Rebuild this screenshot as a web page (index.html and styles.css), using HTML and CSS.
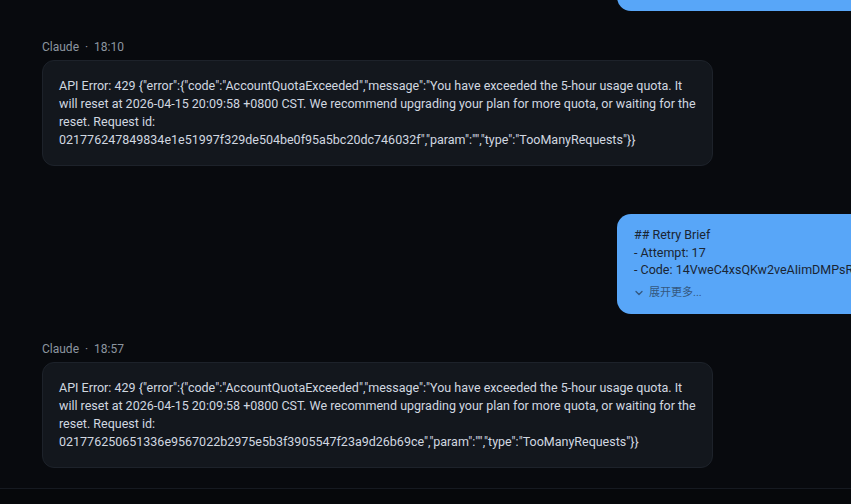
FILE: index.html
```html
<!DOCTYPE html>
<html lang="en">
<head>
<meta charset="utf-8">
<title>Chat</title>
<link rel="stylesheet" href="styles.css">
</head>
<body>
<div class="page">
  <div class="thread">
    <div class="row row-user row-first">
      <div class="user-bubble user-bubble-top"></div>
    </div>

    <div class="row row-claude">
      <div class="meta">Claude <span class="dot">·</span> 18:10</div>
      <div class="claude-bubble">API Error: 429 {"error":{"code":"AccountQuotaExceeded","message":"You have exceeded the 5-hour usage quota. It will reset at 2026-04-15 20:09:58 +0800 CST. We recommend upgrading your plan for more quota, or waiting for the reset. Request id: 021776247849834e1e51997f329de504be0f95a5bc20dc746032f","param":"","type":"TooManyRequests"}}</div>
    </div>

    <div class="row row-user">
      <div class="user-bubble">
        <div class="user-text">## Retry Brief<br>- Attempt: 17<br>- Code: 14VweC4xsQKw2veAIimDMPsRUxY</div>
        <div class="expand">
          <svg class="chev" width="10" height="10" viewBox="0 0 10 10"><path d="M2 3.5 L5 6.5 L8 3.5" fill="none" stroke="currentColor" stroke-width="1.3" stroke-linecap="round" stroke-linejoin="round"/></svg>
          <span>展开更多...</span>
        </div>
      </div>
    </div>

    <div class="row row-claude row-claude-2">
      <div class="meta">Claude <span class="dot">·</span> 18:57</div>
      <div class="claude-bubble">API Error: 429 {"error":{"code":"AccountQuotaExceeded","message":"You have exceeded the 5-hour usage quota. It will reset at 2026-04-15 20:09:58 +0800 CST. We recommend upgrading your plan for more quota, or waiting for the reset. Request id: 021776250651336e9567022b2975e5b3f3905547f23a9d26b69ce","param":"","type":"TooManyRequests"}}</div>
    </div>
  </div>
  <div class="composer"></div>
</div>
</body>
</html>
```
FILE: styles.css
```css
* { box-sizing: border-box; }
html, body {
  margin: 0;
  padding: 0;
  width: 851px;
  height: 504px;
  overflow: hidden;
  background: #080a0e;
}
body {
  font-family: Roboto, "Noto Sans CJK SC", sans-serif;
  color: #d1d7e0;
}
.page {
  display: flex;
  flex-direction: column;
  height: 504px;
}
.thread {
  flex: 1;
  padding: 0 0 0 42px;
  display: flex;
  flex-direction: column;
  border-bottom: 1px solid #161a21;
}
.row-user {
  display: flex;
  padding-left: 575px;
}
.row-first { margin-top: -60px; }
.row-claude { margin-top: 28px; }
.row-claude-2 { margin-top: 27px; }
.row-user:not(.row-first) { margin-top: 48px; }
.meta {
  font-size: 12px;
  line-height: 16px;
  color: #8d96a0;
  margin-bottom: 5px;
}
.dot { margin: 0 3px; }
.claude-bubble {
  width: 671px;
  background: #13171d;
  border: 1px solid #1d222a;
  border-radius: 12px;
  padding: 16px 16px;
  font-size: 12.5px;
  line-height: 18px;
  overflow-wrap: break-word;
}
.user-bubble {
  width: 300px;
  flex-shrink: 0;
  background: #58a6f8;
  border-radius: 14px;
  padding: 12px 17px 13px;
  color: #1a2533;
  white-space: nowrap;
  overflow: hidden;
}
.user-bubble-top { height: 71px; }
.user-text {
  font-size: 12.5px;
  line-height: 17.5px;
}
.expand {
  display: flex;
  align-items: center;
  gap: 5px;
  margin-top: 6px;
  font-size: 11px;
  line-height: 16px;
  color: #34587f;
}
.chev { display: block; }
.composer {
  height: 15px;
  background: #06080b;
}
```
